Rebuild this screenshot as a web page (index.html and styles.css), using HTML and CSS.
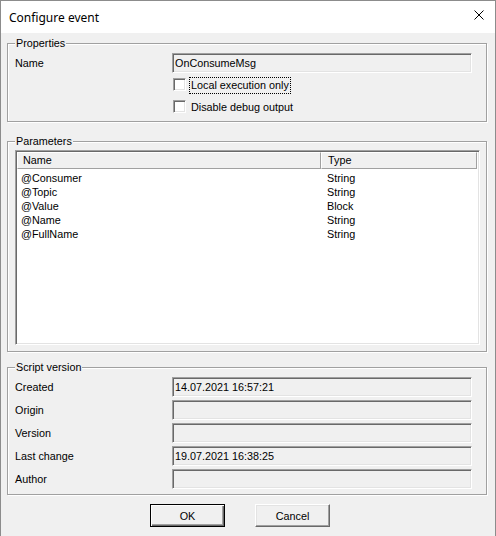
FILE: index.html
```html
<!DOCTYPE html>
<html>
<head>
<meta charset="utf-8">
<title>Configure event</title>
<link rel="stylesheet" href="styles.css">
</head>
<body>
<div class="window">
  <div class="titlebar">
    <span class="title">Configure event</span>
    <svg class="close" width="10" height="10" viewBox="0 0 10 10"><path d="M0.5 0.5 L9.5 9.5 M9.5 0.5 L0.5 9.5" stroke="#000" stroke-width="1" fill="none"/></svg>
  </div>
  <div class="client">
    <fieldset class="group props">
      <legend>Properties</legend>
      <div class="form-row"><span class="lbl">Name</span><div class="field">OnConsumeMsg</div></div>
      <div class="check-row first"><span class="checkbox"></span><span class="check-label focus">Local execution only</span></div>
      <div class="check-row second"><span class="checkbox"></span><span class="check-label">Disable debug output</span></div>
    </fieldset>

    <fieldset class="group params">
      <legend>Parameters</legend>
      <div class="listview">
        <div class="lv-header">
          <div class="hcell hname">Name</div>
          <div class="hcell htype">Type</div>
        </div>
        <div class="lv-rows">
          <div class="lv-row"><span class="cname">@Consumer</span><span class="ctype">String</span></div>
          <div class="lv-row"><span class="cname">@Topic</span><span class="ctype">String</span></div>
          <div class="lv-row"><span class="cname">@Value</span><span class="ctype">Block</span></div>
          <div class="lv-row"><span class="cname">@Name</span><span class="ctype">String</span></div>
          <div class="lv-row"><span class="cname">@FullName</span><span class="ctype">String</span></div>
        </div>
      </div>
    </fieldset>

    <fieldset class="group script">
      <legend>Script version</legend>
      <div class="form-grid">
        <span class="lbl">Created</span><div class="field">14.07.2021 16:57:21</div>
        <span class="lbl">Origin</span><div class="field"></div>
        <span class="lbl">Version</span><div class="field"></div>
        <span class="lbl">Last change</span><div class="field">19.07.2021 16:38:25</div>
        <span class="lbl">Author</span><div class="field"></div>
      </div>
    </fieldset>

    <div class="buttons">
      <div class="btn default">OK</div>
      <div class="btn">Cancel</div>
    </div>
  </div>
</div>
</body>
</html>
```

FILE: styles.css
```css
html, body {
  margin: 0;
  padding: 0;
  background: #f0f0f0;
}

.window {
  width: 496px;
  height: 536px;
  box-sizing: border-box;
  border: 1px solid #8c8c8c;
  border-bottom: none;
  background: #f0f0f0;
  font-family: "Liberation Sans", Arial, sans-serif;
  font-size: 10.8px;
  color: #000;
  overflow: hidden;
}

.titlebar {
  height: 32px;
  background: #fff;
  display: flex;
  align-items: center;
  justify-content: space-between;
  padding-left: 8px;
}

.title {
  font-family: "Noto Sans", "Open Sans", sans-serif;
  font-size: 12px;
  color: #000;
}

.close {
  margin-right: 11px;
  margin-bottom: 4px;
}

.client {
  padding-left: 6px;
  padding-top: 4px;
}

.group {
  width: 480px;
  box-sizing: border-box;
  margin: 0;
  min-width: 0;
  border: 1px solid #a0a0a0;
  box-shadow: inset 1px 1px 0 #fff, 1px 1px 0 #fff;
  padding: 0 0 5px 7px;
}

.group legend {
  padding: 0 1px;
  margin: 0;
  line-height: 13px;
  background: #f0f0f0;
}

.props {
  padding-top: 3px;
}

.params {
  margin-top: 13px;
  padding-top: 2px;
  padding-bottom: 6px;
}

.script {
  margin-top: 9px;
  padding-top: 3px;
}

.form-row {
  display: flex;
  align-items: center;
  height: 20px;
}

.lbl {
  width: 157px;
  flex: none;
}

.field {
  width: 300px;
  height: 20px;
  box-sizing: border-box;
  border-top: 1px solid #a0a0a0;
  border-left: 1px solid #a0a0a0;
  border-right: 1px solid #fff;
  border-bottom: 1px solid #fff;
  box-shadow: inset 1px 1px 0 #696969, inset -1px -1px 0 #e3e3e3;
  background: #f0f0f0;
  padding-left: 2px;
  line-height: 18px;
  white-space: nowrap;
}

.check-row {
  display: flex;
  align-items: flex-start;
  height: 17px;
  margin-left: 158px;
}

.check-row.first {
  margin-top: 4px;
}

.check-row.second {
  margin-top: 5px;
}

.checkbox {
  width: 13px;
  height: 13px;
  box-sizing: border-box;
  margin-top: 1px;
  margin-right: 3px;
  background: #fff;
  border-top: 1px solid #a0a0a0;
  border-left: 1px solid #a0a0a0;
  border-right: 1px solid #fff;
  border-bottom: 1px solid #fff;
  box-shadow: inset 1px 1px 0 #696969, inset -1px -1px 0 #e3e3e3;
  flex: none;
}

.check-label {
  border: 1px solid transparent;
  padding: 0 1px;
  line-height: 15px;
}

.check-label.focus {
  border: 1px dotted #000;
}

.listview {
  width: 465px;
  height: 195px;
  box-sizing: border-box;
  background: #fff;
  border-top: 1px solid #a0a0a0;
  border-left: 1px solid #a0a0a0;
  border-right: 1px solid #fff;
  border-bottom: 1px solid #fff;
  box-shadow: inset 1px 1px 0 #696969, inset -1px -1px 0 #e3e3e3;
  padding: 1px;
}

.lv-header {
  display: flex;
  height: 17px;
}

.hcell {
  box-sizing: border-box;
  height: 17px;
  line-height: 15px;
  background: #f0f0f0;
  border-top: 1px solid #fff;
  border-left: 1px solid #fff;
  border-right: 1px solid #a0a0a0;
  border-bottom: 1px solid #a0a0a0;
}

.hname {
  width: 304px;
  padding-left: 5px;
}

.htype {
  width: 156px;
  padding-left: 6px;
}

.lv-rows {
  padding-top: 2px;
}

.lv-row {
  display: flex;
  height: 14px;
  line-height: 14px;
}

.cname {
  width: 304px;
  padding-left: 4px;
  box-sizing: border-box;
}

.ctype {
  padding-left: 6px;
}

.form-grid {
  display: grid;
  grid-template-columns: 157px 300px;
  grid-auto-rows: 20px;
  row-gap: 3px;
  align-items: center;
}

.buttons {
  display: flex;
  gap: 30px;
  margin-top: 9px;
  margin-left: 143px;
}

.btn {
  width: 75px;
  height: 23px;
  box-sizing: border-box;
  display: flex;
  align-items: center;
  justify-content: center;
  background: #f0f0f0;
  border-top: 1px solid #fff;
  border-left: 1px solid #fff;
  border-right: 1px solid #696969;
  border-bottom: 1px solid #696969;
  box-shadow: inset -1px -1px 0 #a0a0a0, inset 1px 1px 0 #e3e3e3;
}

.btn.default {
  border: 1px solid #000;
  box-shadow: inset 1px 1px 0 #fff, inset -1px -1px 0 #696969, inset -2px -2px 0 #a0a0a0;
}
```
